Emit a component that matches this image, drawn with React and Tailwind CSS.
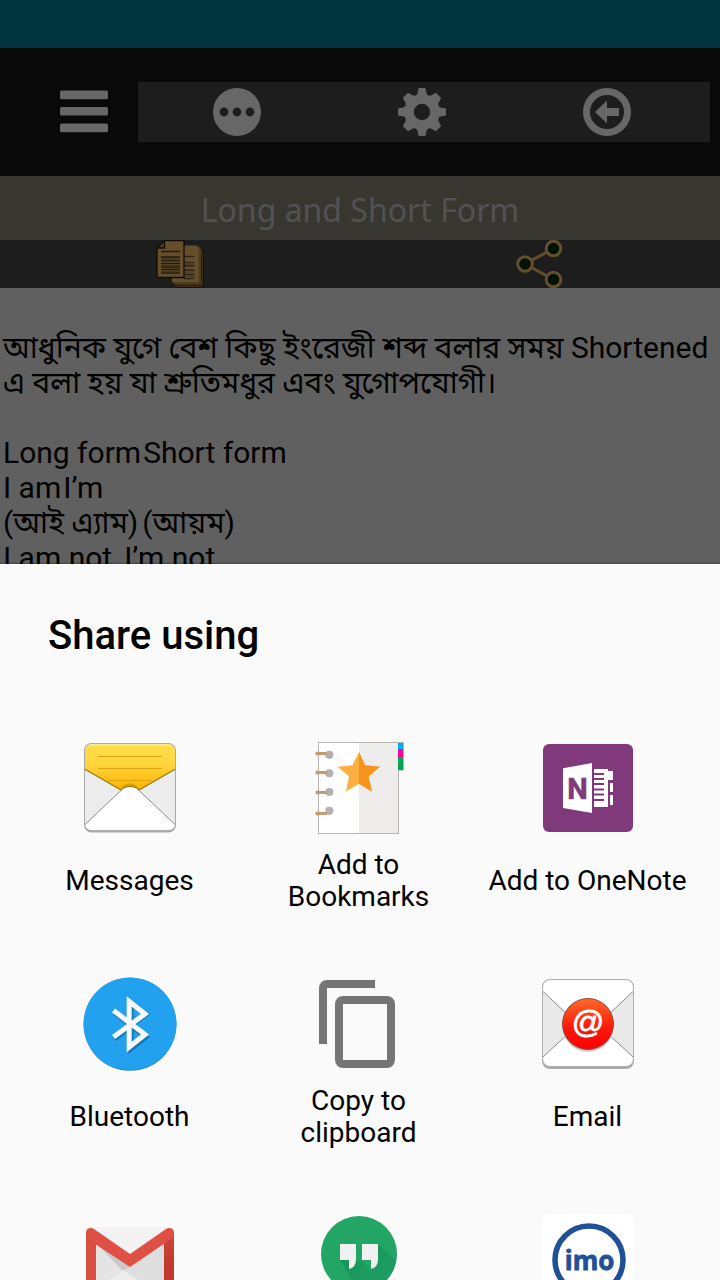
import React from 'react';

function MenuIcon() {
  return (
    <svg className="block size-12" viewBox="0 0 48 48" fill="#676767" aria-hidden="true">
      <rect x="0" y="2.600" width="48" height="8.600" rx="1.500" />
      <rect x="0" y="19" width="48" height="8.600" rx="1.500" />
      <rect x="0" y="35.600" width="48" height="8.600" rx="1.500" />
    </svg>
  );
}

function MoreIcon() {
  return (
    <svg className="block size-12" viewBox="0 0 48 48" aria-hidden="true">
      <circle cx="24" cy="24" r="24" fill="#676767" />
      <g fill="#1d1d1d">
        <circle cx="11" cy="24" r="4.4" />
        <circle cx="24" cy="24" r="4.4" />
        <circle cx="37" cy="24" r="4.4" />
      </g>
    </svg>
  );
}

function GearIcon() {
  return (
    <svg className="block size-12" viewBox="0 0 48 48" aria-hidden="true">
      <path
        fill="#676767"
        fillRule="evenodd"
        d="M20.6 0h6.8l1.2 5.4c.3 1.2 1.2 1.9 2.4 2.2 1 .3 2 .1 2.900-.5L38 4.800 43.200 10l-2.300 4.200c-.6.900-.8 1.900-.5 2.900.3 1.200 1 2.100 2.200 2.400L48 20.600v6.800l-5.400 1.200c-1.200.3-1.900 1.200-2.200 2.400-.3 1-.1 2 .5 2.900l2.300 4.100L38 43.200l-4.100-2.300c-.9-.6-1.900-.8-2.900-.5-1.200.3-2.100 1-2.400 2.200L27.400 48h-6.800l-1.200-5.400c-.3-1.200-1.200-1.900-2.400-2.200-1-.3-2-.1-2.900.5L10 43.200 4.800 38l2.300-4.100c.6-.9.8-1.900.5-2.900-.3-1.200-1-2.100-2.200-2.400L0 27.400v-6.800l5.400-1.200c1.200-.3 1.900-1.200 2.200-2.400.3-1 .1-2-.5-2.900L4.800 10 10 4.800l4.100 2.300c.9.6 1.900.8 2.900.5 1.200-.3 2.100-1 2.400-2.200zM24 15.800a8.200 8.200 0 1 0 0 16.400 8.200 8.200 0 0 0 0-16.400z"
      />
    </svg>
  );
}

function BackIcon() {
  return (
    <svg className="block size-12" viewBox="0 0 48 48" aria-hidden="true">
      <circle cx="24" cy="24" r="20.500" fill="none" stroke="#676767" strokeWidth="7" />
      <path d="M12 24 24 12.500V20h12v8H24v7.500z" fill="#676767" />
    </svg>
  );
}

function PagesIcon() {
  return (
    <svg className="block size-12" viewBox="0 0 48 48" aria-hidden="true">
      <path d="M16 10h28l3.500 0v37.500H21L16 43z" fill="#3b2c17" stroke="#15100a" />
      <path d="M16 5.500h26.500l3 3.500v36H19l-3-3z" fill="#4f3b1e" stroke="#2a1f10" />
      <path d="M16 5.500h24l2.500 3V42H16z" fill="#654e2b" />
      <path
        d="M28 16.500h10.500M28 22.500h10.500M28 26h10.500M28 30h10.500M28 34.500h10.500M28 38.500h10.500"
        stroke="#2e2515"
        strokeWidth="1.400"
      />
      <path d="M28 24.500h10.500M28 32h10.500M28 36.500h10.500" stroke="#4a3a20" strokeWidth="1.200" />
      <path d="M8.500.5H28v37H1V8z" fill="#654e2b" stroke="#120d07" strokeWidth="1.300" />
      <path d="M8.500.5V8H1z" fill="#4f3b1e" stroke="#120d07" strokeWidth="1.300" />
      <path
        d="M5 11.500h19M5 17h19M5 20.500h19M5 23.500h19M5 27h19M5 29.500h19M5 33h19"
        stroke="#241b0f"
        strokeWidth="1.400"
      />
      <path d="M5 18.500h19M5 25.500h19M5 31.500h19" stroke="#46361e" strokeWidth="1.200" />
    </svg>
  );
}

function ShareIcon() {
  return (
    <svg className="block size-12" viewBox="0 0 48 48" aria-hidden="true">
      <g stroke="#654e2b" strokeWidth="3">
        <path d="M37.500 8.500 9 24l28.500 15.500" fill="none" />
        <circle cx="37.500" cy="8.500" r="7.300" fill="#001300" />
        <circle cx="9" cy="24" r="7.300" fill="#001300" />
        <circle cx="37.500" cy="39.500" r="7.300" fill="#001300" />
      </g>
    </svg>
  );
}

function MessagesIcon() {
  return (
    <svg className="block size-24" viewBox="12 10 96 96" aria-hidden="true">
      <defs>
        <linearGradient id="msg-flap" x1="0" y1="0" x2="0" y2="1">
          <stop offset="0" stopColor="#ffde48" />
          <stop offset=".4" stopColor="#ffd740" />
          <stop offset="1" stopColor="#ffb300" />
        </linearGradient>
      </defs>
      <rect x="14" y="13" width="92" height="89.500" rx="7.500" fill="#a9a9a9" />
      <rect x="15" y="14" width="90" height="86" rx="6.500" fill="#ececec" />
      <path d="M15 94.500 52 60q8-7 16 0l37 34.500q-1 5.500-7 5.500H22q-6 0-7-5.500z" fill="#fff" />
      <path d="M15 94.500 51 60.500M69 60.500l36 34" stroke="#8c8c8c" fill="none" />
      <path
        d="M15 38.800V21q0-6.500 6.500-6.500h77q6.500 0 6.500 6.500v17.800L69.500 59.500q-2-2.700-9.500-2.700t-9.500 2.700z"
        fill="url(#msg-flap)"
      />
      <path d="M18 16.500q1-1.500 4-1.500h76q3 0 4 1.500" stroke="#ffeb8c" fill="none" />
      <path d="M51 59q3-5.500 9-5.500t9 5.500q-3-2.500-9-2.500T51 59z" fill="#d79c00" />
      <path
        d="M15 39.200 51 60q3-3.500 9-3.500t9 3.500l36-20.800"
        stroke="#9b7400"
        strokeWidth="1.200"
        fill="none"
      />
      <path d="M28 26.500h64M28 38.500h64M38 50.500h44" stroke="#d9a511" />
    </svg>
  );
}

function BookmarksIcon() {
  return (
    <svg className="block size-24" viewBox="11 10 96 96" aria-hidden="true">
      <path d="M18 12h86v28.500h-5V104H18z" fill="#b4b4b4" />
      <path d="M19 13h40v90H19z" fill="#fff" />
      <path d="M59 13h39v90H59z" fill="#eeedec" />
      <path d="M98 13h5v6h-5z" fill="#00aeef" />
      <path d="M98 19h5v8h-5z" fill="#f4059a" />
      <path d="M98 27h5v13h-5z" fill="#00a651" />
      <path d="m59 22 6 13.200 15 1.500-11.500 9.500L72 61.500l-13-7.700-13 7.700 3-15.300-11.500-9.500 15-1.500z" fill="#fbb040" />
      <path d="m59 22 6 13.200 15 1.500-11.500 9.500L72 61.500l-13-7.700z" fill="#f7941e" />
      <g fill="#b1b1b1">
        <circle cx="29.300" cy="24.800" r="4.100" />
        <circle cx="29.300" cy="43.300" r="4.100" />
        <circle cx="29.300" cy="62" r="4.100" />
        <circle cx="29.300" cy="80.800" r="4.100" />
      </g>
      <g stroke="#aaa" strokeWidth="4" strokeLinecap="round">
        <path d="M17.300 23.500h1M17.300 42.500h1M17.300 62.500h1M17.300 83.500h1" />
      </g>
      <path d="M16 23.500h11M16 42.500h11M16 62.500h11M16 83.500h11" stroke="#c69c6d" strokeWidth="3" />
    </svg>
  );
}

function OneNoteIcon() {
  return (
    <svg className="block size-24" viewBox="10 10 96 96" aria-hidden="true">
      <rect x="13" y="14" width="90" height="88" rx="6" fill="#80397b" />
      <path d="M33 38.200 62 33v50L33 78z" fill="#fff" />
      <path d="M64 39h14v2h5v9h-5v27H64z" fill="#fff" />
      <path d="M80 53h3v9h-3zM80 65h3v10h-3z" fill="#fff" />
      <path
        d="M64 44h10M64 49h10M64 54h10M64 59.500h10M64 64.500h10M64 70h10"
        stroke="#80397b"
        strokeWidth="2"
      />
      <text
        x="47.500"
        y="68.500"
        textAnchor="middle"
        fontFamily="Liberation Sans Narrow, Roboto, sans-serif"
        fontWeight="700"
        fontSize="29"
        fill="#80397b"
        stroke="#80397b"
        strokeWidth=".6"
      >
        N
      </text>
    </svg>
  );
}

function BluetoothIcon() {
  return (
    <svg className="block size-24" viewBox="12 12 96 96" aria-hidden="true">
      <circle cx="60" cy="60.300" r="46.500" fill="#1a86c8" />
      <circle cx="60" cy="59.800" r="46.300" fill="#22a1ee" />
      <path
        d="m43.500 47.500 31.500 24.500L60 84V38l15 11.500-31.500 24.500"
        transform="translate(1 1)"
        fill="none"
        stroke="#1677b5"
        strokeWidth="5"
      />
      <path d="M43.500 46.500 75 70.500 59.200 83V37.500L75 50 43.500 73" fill="none" stroke="#fafafa" strokeWidth="5" />
    </svg>
  );
}

function CopyIcon() {
  return (
    <svg className="block size-24" viewBox="11 12 96 96" aria-hidden="true">
      <path
        fill="#757575"
        fillRule="evenodd"
        d="M75 16H27a8 8 0 0 0-8 8v56h8V24h48zM87 32H43a8 8 0 0 0-8 8v56a8 8 0 0 0 8 8h44a8 8 0 0 0 8-8V40a8 8 0 0 0-8-8zm0 64H43V40h44z"
      />
    </svg>
  );
}

function EmailIcon() {
  return (
    <svg className="block size-24" viewBox="10 12 96 96" aria-hidden="true">
      <defs>
        <linearGradient id="mail-seal" x1="0" y1="0" x2="0" y2="1">
          <stop offset="0" stopColor="#ff6a2a" />
          <stop offset=".6" stopColor="#fb1608" />
          <stop offset="1" stopColor="#ff0000" />
        </linearGradient>
      </defs>
      <rect x="12" y="15" width="92" height="90" rx="8" fill="#acacac" />
      <rect x="13" y="16" width="90" height="86" rx="7" fill="#fff" />
      <path d="M13 27.500 48 60 13 93zM103 27.500 68 60l35 33z" fill="#e9e9e9" />
      <path d="m13 27.500 35 33L13 93M103 27.500 68 60.500 103 93" fill="none" stroke="#8d8d8d" />
      <circle cx="58" cy="62.500" r="25.500" fill="#cfcfcf" />
      <circle cx="58" cy="60" r="25.500" fill="url(#mail-seal)" stroke="#8e4a3c" />
      <text
        x="57.500"
        y="68.500"
        textAnchor="middle"
        fontFamily="Liberation Sans, sans-serif"
        fontStyle="italic"
        fontSize="32"
        fill="#fff"
        stroke="#fff"
        strokeWidth=".8"
      >
        @
      </text>
    </svg>
  );
}

function GmailIcon() {
  return (
    <svg className="block size-24" viewBox="12 12 96 96" aria-hidden="true">
      <defs>
        <linearGradient id="gm-right" x1="0" y1="0" x2="0" y2="1">
          <stop offset="0" stopColor="#d2453a" />
          <stop offset=".5" stopColor="#bf392c" />
        </linearGradient>
      </defs>
      <path d="M22 27h76v72H22z" fill="#f2f2f2" />
      <path d="M26 40 60 66l34-25v58H26z" fill="#dedede" />
      <path d="M26 44 53 71l-27 22z" fill="#e4e4e4" />
      <path d="m26 43 27 28 7-4z" fill="#c9c9c9" />
      <path d="m53 70 41 29H26v-9z" fill="#ededed" />
      <path d="M16 33v62q0 4 4 4h6V38z" fill="#db4f43" />
      <path d="M104 33v62q0 4-4 4h-6V38z" fill="url(#gm-right)" />
      <path
        d="M16 33q0-5 5-5 1.500 0 3 1l36 25 36-25q1.500-1 3-1 5 0 5 5 0 4-3 6L60 67 19 40q-3-2.500-3-7z"
        fill="#e04f43"
      />
    </svg>
  );
}

function HangoutsIcon() {
  return (
    <svg className="block size-24" viewBox="11 12 96 96" aria-hidden="true">
      <defs>
        <linearGradient id="hg-shade" x1="0" y1="0" x2="1" y2="1">
          <stop offset="0" stopColor="#16935a" />
          <stop offset="1" stopColor="#20a264" />
        </linearGradient>
      </defs>
      <circle cx="59" cy="54.500" r="38" fill="#c9d8d0" />
      <circle cx="59" cy="54" r="38" fill="#23a566" />
      <path d="M78 44 96 61q-4 19-21 28L62 76l9-7 0-9h7z" fill="url(#hg-shade)" />
      <path d="M40 60h9v9l7-8 6 0 9 9v18q-7 4-12 4z" fill="url(#hg-shade)" />
      <path d="M40 44h16v15q0 8.500-7 10v-9h-9zM62 44h16v15q0 8.500-7 10v-9h-9z" fill="#f1f1f1" />
    </svg>
  );
}

function ImoIcon() {
  return (
    <svg className="block size-24" viewBox="10 12 96 96" aria-hidden="true">
      <rect x="11" y="13" width="94" height="94" rx="9" fill="#fff" stroke="#f1f1f1" strokeWidth=".6" />
      <circle cx="59" cy="60" r="34" fill="none" stroke="#205096" strokeWidth="5.500" />
      <text
        x="59.500"
        y="69.500"
        textAnchor="middle"
        fontFamily="Open Sans, sans-serif"
        fontWeight="700"
        fontSize="26"
        fill="#205096"
        stroke="#205096"
        strokeWidth=".8"
      >
        imo
      </text>
    </svg>
  );
}

const tools = [
  { label: 'More', Icon: MoreIcon },
  { label: 'Settings', Icon: GearIcon },
  { label: 'Back', Icon: BackIcon },
];

const targets = [
  { label: 'Messages', Icon: MessagesIcon },
  { label: 'Add to Bookmarks', Icon: BookmarksIcon },
  { label: 'Add to OneNote', Icon: OneNoteIcon },
  { label: 'Bluetooth', Icon: BluetoothIcon },
  { label: 'Copy to clipboard', Icon: CopyIcon },
  { label: 'Email', Icon: EmailIcon },
];

const moreTargets = [
  { label: 'Gmail', Icon: GmailIcon },
  { label: 'Hangouts', Icon: HangoutsIcon },
  { label: 'imo', Icon: ImoIcon },
];

export default function App() {
  return (
    <div className="flex h-screen flex-col overflow-hidden bg-[#606060] font-['Roboto','Noto_Sans_Bengali','Noto_Sans',sans-serif] text-black">
      <div className="h-12 shrink-0 bg-[#00343f]" />

      <header className="flex h-32 shrink-0 items-center bg-[#090909] pr-2.5 pl-15">
        <button type="button" aria-label="Menu" className="mr-[30px] shrink-0">
          <MenuIcon />
        </button>
        <nav className="grid flex-1 grid-cols-3 bg-[#1d1d1d] py-1.5 pr-2.5 pl-1.5">
          {tools.map(({ label, Icon }) => (
            <button key={label} type="button" aria-label={label} className="flex justify-center">
              <Icon />
            </button>
          ))}
        </nav>
      </header>

      <h1 className="shrink-0 bg-[#38372f] pt-1 text-center font-['Noto_Sans',sans-serif] text-[32px] leading-[60px] text-[#525254]">
        Long and Short Form
      </h1>

      <div className="grid shrink-0 grid-cols-2 bg-[#1d1d1d]">
        <button type="button" aria-label="Copy text" className="flex justify-center">
          <PagesIcon />
        </button>
        <button type="button" aria-label="Share text" className="flex justify-center">
          <ShareIcon />
        </button>
      </div>

      <main className="h-[276px] shrink-0 overflow-hidden px-[3px] pt-[42px] text-[30px] leading-[35px] whitespace-nowrap">
        <p>আধুনিক যুগে বেশ কিছু ইংরেজী শব্দ বলার সময় Shortened</p>
        <p>এ বলা হয় যা শ্রুতিমধুর এবং যুগোপযোগী।</p>
        <div className="mt-[35px]">
          <p className="flex gap-0.5">
            <span>Long form</span>
            <span>Short form</span>
          </p>
          <p className="flex gap-0.5">
            <span>I am</span>
            <span>I’m</span>
          </p>
          <p className="flex gap-1">
            <span>(আই এ্যাম)</span>
            <span>(আয়ম)</span>
          </p>
          <p className="flex gap-3">
            <span>I am not</span>
            <span>I’m not</span>
          </p>
        </div>
      </main>

      <section
        aria-labelledby="share-title"
        className="shrink-0 bg-[#fafafa] pt-12 shadow-[0_-1px_2px_rgba(0,0,0,0.3)]"
      >
        <h2 id="share-title" className="px-12 text-[40px] leading-[48px] font-medium">
          Share using
        </h2>
        <div className="mt-20 grid grid-cols-3 gap-y-[63px] pr-[18px] pl-[15px]">
          {targets.map(({ label, Icon }) => (
            <button key={label} type="button" className="flex flex-col items-center gap-[13px]">
              <Icon />
              <span className="flex h-16 max-w-[200px] items-center text-center text-[28px] leading-8">
                {label}
              </span>
            </button>
          ))}
          {moreTargets.map(({ label, Icon }) => (
            <button key={label} type="button" aria-label={label} className="flex justify-center">
              <Icon />
            </button>
          ))}
        </div>
      </section>
    </div>
  );
}
